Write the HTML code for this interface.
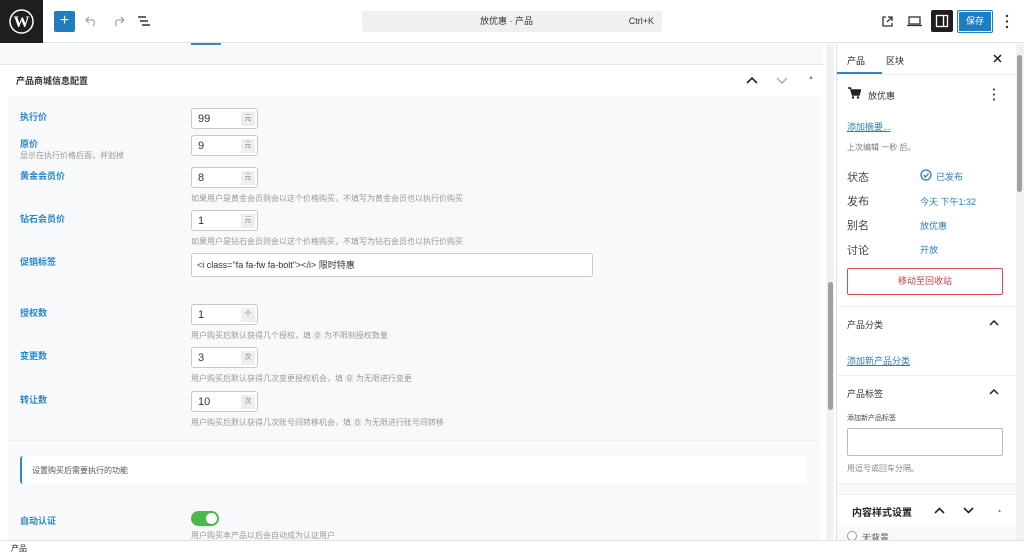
<!DOCTYPE html><html><head><meta charset="utf-8"><style>
*{box-sizing:border-box;margin:0;padding:0}
body{width:1024px;height:555px;overflow:hidden;background:#fff;font-family:"Liberation Sans","Noto Sans CJK SC",sans-serif;position:relative;color:#1e1e1e}
.abs{position:absolute}
.top{left:0;top:0;width:1024px;height:43px;background:#fff;border-bottom:1px solid #e0e0e0}
.lbl{position:absolute;left:20px;font-size:9px;color:#2a87c8;font-weight:bold}
.inp{position:absolute;left:191px;width:67px;height:21px;border:1px solid #c8c8c8;border-radius:3px;background:#fff;font-size:11px;padding:4px 6px;color:#333}
.inp span{position:absolute;right:2px;top:3px;width:14px;height:14px;background:#eee;font-size:7px;color:#888;text-align:center;line-height:14px}
.hint{position:absolute;left:191px;font-size:8px;color:#9a9a9a}
.hint b{font-weight:normal;background:#eee;padding:0 2px;border-radius:2px}
.sbl{position:absolute;left:847px;font-size:11px;color:#444}
.sbv{position:absolute;left:920px;font-size:9px;color:#2a7fb3}
</style></head><body>
<div class="abs top"></div>
<div class="abs" style="left:0;top:0;width:43px;height:43px;background:#1e1e1e"></div>
<svg class="abs" style="left:9px;top:9px" width="25" height="25" viewBox="0 0 25 25"><circle cx="12.5" cy="12.5" r="11.5" fill="none" stroke="#fff" stroke-width="1.5"/><text x="12.5" y="18" font-size="16" font-family="Liberation Serif" font-weight="bold" fill="#fff" text-anchor="middle">W</text></svg>
<div class="abs" style="left:54px;top:11px;width:21px;height:21px;background:#1e7ec0;border-radius:2px;color:#fff;font-size:16px;text-align:center;line-height:20px">+</div>
<svg class="abs" style="left:85px;top:15px" width="14" height="12"><path d="M4 2L1 5l3 3M1 5h7a4 4 0 0 1 0 6" stroke="#aaa" stroke-width="1.3" fill="none"/></svg>
<svg class="abs" style="left:111px;top:15px" width="14" height="12"><path d="M10 2l3 3-3 3M13 5H6a4 4 0 0 0 0 6" stroke="#aaa" stroke-width="1.3" fill="none"/></svg>
<svg class="abs" style="left:137px;top:15px" width="14" height="12"><path d="M1 2h8M3 6h8M5 10h8" stroke="#333" stroke-width="1.5"/></svg>
<div class="abs" style="left:362px;top:11px;width:300px;height:21px;background:#f0f0f0;border-radius:2px;font-size:9px;color:#333;line-height:21px"><span style="position:absolute;left:118px">放优惠 · 产品</span><span style="position:absolute;right:8px">Ctrl+K</span></div>
<svg class="abs" style="left:881px;top:15px" width="13" height="13"><path d="M5 2H2v9h9V8M7 2h4v4M11 2L6 7" stroke="#333" stroke-width="1.3" fill="none"/></svg>
<svg class="abs" style="left:907px;top:15px" width="15" height="12"><rect x="2" y="2" width="11" height="7" stroke="#333" stroke-width="1.3" fill="none"/><path d="M0 10.5h15" stroke="#333" stroke-width="1.3"/></svg>
<div class="abs" style="left:931px;top:10px;width:22px;height:22px;background:#1e1e1e;border-radius:2px"></div>
<svg class="abs" style="left:935px;top:14px" width="14" height="14"><rect x="1.5" y="1.5" width="11" height="11" stroke="#fff" stroke-width="1.3" fill="none"/><path d="M8.5 1.5v11" stroke="#fff" stroke-width="1.3"/></svg>
<div class="abs" style="left:957px;top:10px;width:36px;height:23px;background:#1e7ec0;border:1px solid #1e7ec0;box-shadow:inset 0 0 0 1px #fff;border-radius:2px;color:#fff;font-size:9px;text-align:center;line-height:21px">保存</div>
<svg class="abs" style="left:1004px;top:14px" width="6" height="15"><circle cx="3" cy="2" r="1.2" fill="#333"/><circle cx="3" cy="7.5" r="1.2" fill="#333"/><circle cx="3" cy="13" r="1.2" fill="#333"/></svg>

<!-- main -->
<div class="abs" style="left:0;top:44px;width:823px;height:21px;background:#f8f9fa;border-bottom:1px solid #e5e5e5"></div>
<div class="abs" style="left:191px;top:43px;width:30px;height:2px;background:#3f84c4"></div>
<div class="abs" style="left:16px;top:74px;font-size:9px;color:#333;font-weight:bold">产品商城信息配置</div>
<svg class="abs" style="left:746px;top:76px" width="12" height="8"><path d="M1 7l5-5 5 5" stroke="#222" stroke-width="1.6" fill="none"/></svg>
<svg class="abs" style="left:776px;top:77px" width="12" height="8"><path d="M1 1l5 5 5-5" stroke="#aaa" stroke-width="1.4" fill="none"/></svg>
<div class="abs" style="left:808px;top:75px;font-size:6px;color:#888">▲</div>
<div class="abs" style="left:8px;top:97px;width:812px;height:443px;background:#f7f9fb"></div>

<div class="lbl" style="top:110px">执行价</div>
<div class="inp" style="top:108px">99<span>元</span></div>
<div class="lbl" style="top:137px">原价</div>
<div class="abs" style="left:20px;top:150px;font-size:8px;color:#999">显示在执行价格后面，并划掉</div>
<div class="inp" style="top:135px">9<span>元</span></div>
<div class="lbl" style="top:169px">黄金会员价</div>
<div class="inp" style="top:167px">8<span>元</span></div>
<div class="hint" style="top:193px">如果用户是黄金会员则会以这个价格购买，不填写为黄金会员也以执行价购买</div>
<div class="lbl" style="top:212px">钻石会员价</div>
<div class="inp" style="top:210px">1<span>元</span></div>
<div class="hint" style="top:236px">如果用户是钻石会员则会以这个价格购买，不填写为钻石会员也以执行价购买</div>
<div class="lbl" style="top:255px">促销标签</div>
<div class="abs" style="left:191px;top:253px;width:402px;height:24px;border:1px solid #c8c8c8;border-radius:3px;background:#fff;font-size:9px;padding:4px 5px;color:#333">&lt;i class="fa fa-fw fa-bolt"&gt;&lt;/i&gt; 限时特惠</div>
<div class="lbl" style="top:306px">授权数</div>
<div class="inp" style="top:304px">1<span>个</span></div>
<div class="hint" style="top:330px">用户购买后默认获得几个授权，填 <b>0</b> 为不限制授权数量</div>
<div class="lbl" style="top:349px">变更数</div>
<div class="inp" style="top:347px">3<span>次</span></div>
<div class="hint" style="top:373px">用户购买后默认获得几次变更授权机会，填 <b>0</b> 为无限进行变更</div>
<div class="lbl" style="top:393px">转让数</div>
<div class="inp" style="top:391px">10<span>次</span></div>
<div class="hint" style="top:417px">用户购买后默认获得几次账号间转移机会，填 <b>0</b> 为无限进行账号间转移</div>
<div class="abs" style="left:8px;top:440px;width:812px;height:1px;background:#eee"></div>
<div class="abs" style="left:20px;top:456px;width:787px;height:28px;background:#fff;border-left:2px solid #2a87c8;border-radius:3px;font-size:8px;color:#555;padding:9px 10px">设置购买后需要执行的功能</div>
<div class="lbl" style="top:514px">自动认证</div>
<div class="abs" style="left:191px;top:511px;width:28px;height:15px;background:#4cb84c;border-radius:8px"><div style="position:absolute;right:2px;top:2px;width:11px;height:11px;background:#fff;border-radius:50%"></div></div>
<div class="hint" style="top:530px">用户购买本产品以后会自动成为认证用户</div>
<div class="abs" style="left:826px;top:44px;width:8px;height:496px;background:#f2f2f2"></div>
<div class="abs" style="left:828px;top:282px;width:5px;height:128px;background:#a0a0a0;border-radius:3px"></div>

<!-- sidebar -->
<div class="abs" style="left:836px;top:44px;width:180px;height:496px;background:#fff;border-left:1px solid #e0e0e0"></div>
<div class="abs" style="left:847px;top:54px;font-size:9px;color:#222">产品</div>
<div class="abs" style="left:886px;top:54px;font-size:9px;color:#222">区块</div>
<svg class="abs" style="left:993px;top:54px" width="9" height="9"><path d="M1 1l7 7M8 1L1 8" stroke="#222" stroke-width="1.5"/></svg>
<div class="abs" style="left:837px;top:72px;width:45px;height:2px;background:#2a87c8"></div>
<div class="abs" style="left:837px;top:74px;width:179px;height:1px;background:#eee"></div>
<svg class="abs" style="left:848px;top:87px" width="13" height="12"><path d="M0 1h2.5l2 7h6.5l1.5-5H4" stroke="#222" stroke-width="1.5" fill="#222"/><circle cx="5" cy="10.5" r="1.2" fill="#222"/><circle cx="10" cy="10.5" r="1.2" fill="#222"/></svg>
<div class="abs" style="left:868px;top:89px;font-size:9px;color:#333">放优惠</div>
<svg class="abs" style="left:991px;top:88px" width="6" height="13"><circle cx="3" cy="1.5" r="1.1" fill="#444"/><circle cx="3" cy="6.5" r="1.1" fill="#444"/><circle cx="3" cy="11.5" r="1.1" fill="#444"/></svg>
<div class="abs" style="left:847px;top:120px;font-size:9px;color:#2a7fb3;text-decoration:underline">添加摘要...</div>
<div class="abs" style="left:847px;top:142px;font-size:8px;color:#777">上次编辑 一秒 后。</div>
<div class="sbl" style="top:169px">状态</div>
<svg class="abs" style="left:920px;top:169px" width="12" height="12"><circle cx="6" cy="6" r="5" stroke="#2a7fb3" stroke-width="1.3" fill="none"/><path d="M3.5 6l2 2 3-3.5" stroke="#2a7fb3" stroke-width="1.3" fill="none"/></svg>
<div class="sbv" style="top:170px;left:936px">已发布</div>
<div class="sbl" style="top:193px">发布</div><div class="sbv" style="top:195px">今天 下午1:32</div>
<div class="sbl" style="top:217px">别名</div><div class="sbv" style="top:219px">放优惠</div>
<div class="sbl" style="top:242px">讨论</div><div class="sbv" style="top:243px">开放</div>
<div class="abs" style="left:847px;top:268px;width:156px;height:27px;border:1px solid #d05050;border-radius:2px;font-size:9px;color:#c04040;text-align:center;line-height:25px">移动至回收站</div>
<div class="abs" style="left:837px;top:306px;width:179px;height:1px;background:#eee"></div>
<div class="abs" style="left:847px;top:318px;font-size:9px;color:#333">产品分类</div>
<svg class="abs" style="left:989px;top:320px" width="10" height="6"><path d="M1 5l4-4 4 4" stroke="#222" stroke-width="1.5" fill="none"/></svg>
<div class="abs" style="left:847px;top:354px;font-size:9px;color:#2a7fb3;text-decoration:underline">添加新产品分类</div>
<div class="abs" style="left:837px;top:375px;width:179px;height:1px;background:#eee"></div>
<div class="abs" style="left:847px;top:387px;font-size:9px;color:#333">产品标签</div>
<svg class="abs" style="left:989px;top:389px" width="10" height="6"><path d="M1 5l4-4 4 4" stroke="#222" stroke-width="1.5" fill="none"/></svg>
<div class="abs" style="left:847px;top:413px;font-size:7px;color:#444">添加新产品标签</div>
<div class="abs" style="left:847px;top:428px;width:156px;height:28px;border:1px solid #bbb;border-radius:2px"></div>
<div class="abs" style="left:847px;top:463px;font-size:8px;color:#888">用逗号或回车分隔。</div>
<div class="abs" style="left:837px;top:483px;width:179px;height:12px;background:#fafafa;border-top:1px solid #eee;border-bottom:1px solid #eee"></div>
<div class="abs" style="left:852px;top:504px;font-size:10px;font-weight:bold;color:#222">内容样式设置</div>
<svg class="abs" style="left:934px;top:507px" width="11" height="7"><path d="M1 6l4.5-4.5L10 6" stroke="#222" stroke-width="1.6" fill="none"/></svg>
<svg class="abs" style="left:963px;top:507px" width="11" height="7"><path d="M1 1l4.5 4.5L10 1" stroke="#222" stroke-width="1.6" fill="none"/></svg>
<div class="abs" style="left:997px;top:508px;font-size:5px;color:#888">▲</div>
<div class="abs" style="left:837px;top:525px;width:179px;height:15px;background:#f7f9fb;overflow:hidden"><div style="position:absolute;left:10px;top:6px;width:10px;height:10px;border:1px solid #999;border-radius:50%;background:#fff"></div><div style="position:absolute;left:25px;top:6px;font-size:9px;color:#555">无背景</div></div>
<div class="abs" style="left:1016px;top:44px;width:8px;height:496px;background:#f2f2f2"></div>
<div class="abs" style="left:1017px;top:55px;width:5px;height:137px;background:#a0a0a0;border-radius:3px"></div>

<div class="abs" style="left:0;top:540px;width:1024px;height:15px;background:#fff;border-top:1px solid #e0e0e0;font-size:8px;color:#333;padding:2px 0 0 11px">产品</div>
</body></html>
